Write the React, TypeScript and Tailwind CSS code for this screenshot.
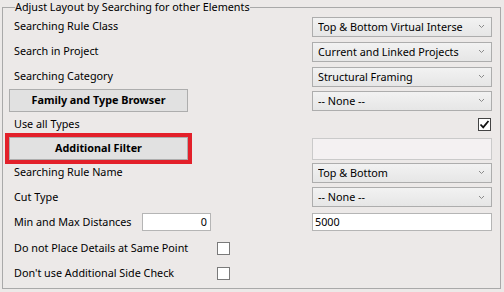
import React from 'react';

const FONT = "font-['Noto_Sans',_'Open_Sans',_sans-serif]";

function Chevron() {
  return (
    <svg width="7" height="5" viewBox="0 0 7 5" className="shrink-0" aria-hidden="true">
      <path d="M1 1 L3.5 3.5 L6 1" fill="none" stroke="#8a8a8a" strokeWidth="1" />
    </svg>
  );
}

function Select({ value }: { value: string }) {
  return (
    <div className="w-[180px] h-[20px] flex items-center border border-[#adadad] bg-gradient-to-b from-[#f2f2f2] to-[#e6e6e6] pl-[5px] pr-[6px]">
      <span className="flex-1 overflow-hidden whitespace-nowrap leading-[14px]">{value}</span>
      <Chevron />
    </div>
  );
}

function Checkbox({ checked = false }: { checked?: boolean }) {
  return (
    <div
      className={`w-[13px] h-[13px] border bg-white flex items-center justify-center ${
        checked ? 'border-[#444]' : 'border-[#7a7a7a]'
      }`}
    >
      {checked && (
        <svg width="11" height="11" viewBox="0 0 11 11" aria-hidden="true">
          <path d="M1.5 5.5 L4.2 8.3 L9.5 2" fill="none" stroke="#111" strokeWidth="1.8" />
        </svg>
      )}
    </div>
  );
}

function Row({ h, children }: { h: string; children: React.ReactNode }) {
  return <div className={`${h} flex items-center justify-between`}>{children}</div>;
}

function Label({ children }: { children: React.ReactNode }) {
  return <span className="pl-[5px] whitespace-nowrap">{children}</span>;
}

function WinButton({ children, highlight = false }: { children: React.ReactNode; highlight?: boolean }) {
  return (
    <button
      className={`w-[179px] h-[23px] border border-[#adadad] bg-[#e1e1e1] font-bold ${
        highlight ? 'outline-4 outline-[#e3202a]' : ''
      }`}
    >
      {children}
    </button>
  );
}

export default function App() {
  return (
    <div className={`w-[504px] h-[292px] bg-[#ece9e8] pl-[2px] text-[10.8px] text-black ${FONT}`}>
      <fieldset className="w-[499px] h-[289px] border border-[#a9a9a9] pl-[6px] pr-[8px]">
        <legend className="ml-[6px] leading-[14px]">Adjust Layout by Searching for other Elements</legend>

        <Row h="h-[25px]">
          <Label>Searching Rule Class</Label>
          <Select value="Top & Bottom Virtual Interse" />
        </Row>
        <Row h="h-[25px]">
          <Label>Search in Project</Label>
          <Select value="Current and Linked Projects" />
        </Row>
        <Row h="h-[25px]">
          <Label>Searching Category</Label>
          <Select value="Structural Framing" />
        </Row>
        <Row h="h-[23px]">
          <WinButton>Family and Type Browser</WinButton>
          <Select value="-- None --" />
        </Row>
        <Row h="h-[25px]">
          <Label>Use all Types</Label>
          <div className="pr-[1px]">
            <Checkbox checked />
          </div>
        </Row>
        <Row h="h-[23px]">
          <WinButton highlight>Additional Filter</WinButton>
          <div className="w-[180px] h-[22px] border border-[#cacaca] bg-[#f4f1f2]" />
        </Row>
        <Row h="h-[25px]">
          <Label>Searching Rule Name</Label>
          <Select value="Top & Bottom" />
        </Row>
        <Row h="h-[24px]">
          <Label>Cut Type</Label>
          <Select value="-- None --" />
        </Row>
        <Row h="h-[26px]">
          <div className="flex items-center">
            <span className="w-[133px] pl-[5px] whitespace-nowrap">Min and Max Distances</span>
            <div className="w-[69px] h-[18px] border border-[#b5b5b5] bg-white flex items-center justify-end pr-[3px] leading-[14px]">
              0
            </div>
          </div>
          <div className="w-[180px] h-[18px] border border-[#b5b5b5] bg-white flex items-center pl-[2px] leading-[14px]">
            5000
          </div>
        </Row>
        <Row h="h-[26px]">
          <div className="flex items-center">
            <span className="w-[208px] pl-[5px] whitespace-nowrap">Do not Place Details at Same Point</span>
            <Checkbox />
          </div>
        </Row>
        <Row h="h-[25px]">
          <div className="flex items-center">
            <span className="w-[208px] pl-[5px] whitespace-nowrap">Don't use Additional Side Check</span>
            <Checkbox />
          </div>
        </Row>
      </fieldset>
    </div>
  );
}
